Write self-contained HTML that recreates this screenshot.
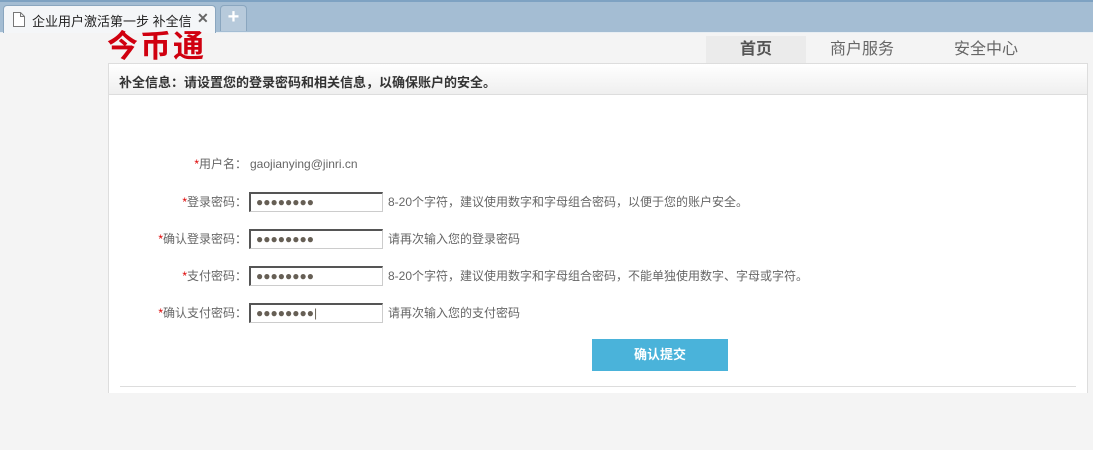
<!DOCTYPE html>
<html><head><meta charset="utf-8"><style>
*{margin:0;padding:0;box-sizing:border-box}
body{width:1093px;height:450px;background:#f4f4f4;font-family:"Liberation Sans","Noto Sans CJK SC",sans-serif;position:relative;overflow:hidden;color:#555}
.abs{position:absolute}
.bar{left:0;top:0;width:1093px;height:33px;background:#a4bdd3;border-top:2px solid #7ea2c2;border-bottom:1px solid #e8eef3}
.tab{left:3px;top:5px;width:213px;height:28px;background:#f4f6f8;border:1px solid #8aa6bf;border-bottom:none;border-radius:4px 4px 0 0;font-size:13px;color:#222}
.tt{position:absolute;left:28px;top:5px;width:160px;overflow:hidden;white-space:nowrap}
.plus{left:220px;top:5px;width:27px;height:26px;background:#b7cadb;border:1px solid #8aa6bf;border-bottom:none;border-radius:4px 4px 0 0;color:#fff;font-size:20px;text-align:center;line-height:22px;font-weight:bold}
.logo{left:107px;top:29px;font-size:31px;font-weight:bold;color:#d0000f;letter-spacing:2px;line-height:36px}
.nav{top:36px;height:27px;font-size:16px;text-align:center;width:100px;line-height:27px;color:#666}
.panel{left:108px;top:63px;width:980px;height:330px;background:#fff;border:1px solid #ddd;border-bottom:none}
.hdr{left:0;top:0;width:978px;height:31px;background:linear-gradient(#fff,#efefef);border-bottom:1px solid #ddd;font-size:13px;font-weight:bold;color:#333;padding:8px 0 0 10px}
.row{left:0;width:978px;height:20px;font-size:12px;line-height:20px}
.lab{position:absolute;right:840px;text-align:right;white-space:nowrap;color:#666}
.lab b{color:#d00;font-weight:normal}
.inp{position:absolute;left:140px;top:0;width:134px;height:20px;border:1px solid #ccc;border-top:2px solid #555;border-left:2px solid #555;font-size:12px;letter-spacing:0px;line-height:16px;padding-left:5px;color:#665f55}
.tip{position:absolute;left:279px;color:#666;white-space:nowrap}
.btn{left:483px;top:275px;width:136px;height:32px;background:#4ab3da;color:#fff;font-weight:bold;font-size:13px;text-align:center;line-height:32px}
.line{left:11px;top:322px;width:956px;height:1px;background:#ddd}
</style></head><body>
<div class="abs bar"></div>
<div class="abs tab"><svg class="abs" style="left:9px;top:6px" width="12" height="15"><path d="M.5 .5h7l4 4v10H.5z M7.5 .5v4h4" fill="#fff" stroke="#777"/></svg><span class="tt">企业用户激活第一步 补全信息|</span><span class="abs" style="left:193px;top:4px;color:#666;font-weight:bold;font-size:14px">✕</span></div>
<div class="abs plus">+</div>
<div class="abs logo">今币通</div>
<div class="abs nav" style="left:706px;background:#ebebeb;color:#555;font-weight:bold">首页</div>
<div class="abs nav" style="left:812px">商户服务</div>
<div class="abs nav" style="left:936px">安全中心</div>
<div class="abs panel">
<div class="abs hdr">补全信息：请设置您的登录密码和相关信息，以确保账户的安全。</div>
<div class="abs row" style="top:90px"><span class="lab"><b>*</b>用户名： </span><span class="tip" style="left:141px">gaojianying@jinri.cn</span></div>
<div class="abs row" style="top:128px"><span class="lab"><b>*</b>登录密码： </span><span class="inp">●●●●●●●●</span><span class="tip">8-20个字符，建议使用数字和字母组合密码，以便于您的账户安全。</span></div>
<div class="abs row" style="top:165px"><span class="lab"><b>*</b>确认登录密码： </span><span class="inp">●●●●●●●●</span><span class="tip">请再次输入您的登录密码</span></div>
<div class="abs row" style="top:202px"><span class="lab"><b>*</b>支付密码： </span><span class="inp">●●●●●●●●</span><span class="tip">8-20个字符，建议使用数字和字母组合密码，不能单独使用数字、字母或字符。</span></div>
<div class="abs row" style="top:239px"><span class="lab"><b>*</b>确认支付密码： </span><span class="inp">●●●●●●●●|</span><span class="tip">请再次输入您的支付密码</span></div>
<div class="abs btn">确认提交</div>
<div class="abs line"></div>
</div>
</body></html>
